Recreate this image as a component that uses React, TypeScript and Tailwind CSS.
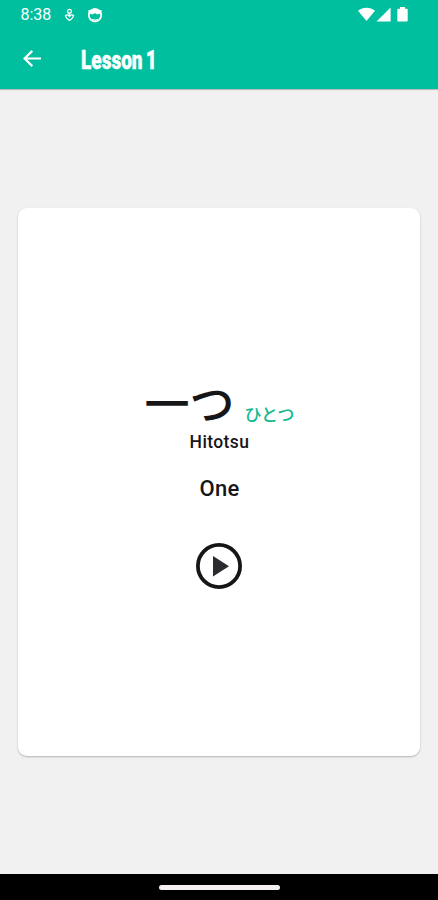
function StatusBar() {
  return (
    <div className="flex h-[29px] items-center pl-[20.5px] pr-[30px] text-white">
      <span className="w-[43.500px] text-[16px] leading-[29px]">8:38</span>
      <svg className="h-[14px] w-[11px]" viewBox="0 0 11 14" fill="none" stroke="currentColor" strokeWidth="1.300">
        <circle cx="5.500" cy="3.200" r="1.900" />
        <path d="M5.500 5v4M1.500 7.600C1.500 9.500 3 10.800 5.500 12.500 8 10.800 9.500 9.500 9.500 7.600 8 6.200 6.500 7 5.500 8.600 4.500 7 3 6.200 1.500 7.600Z" strokeLinejoin="round" />
      </svg>
      <svg className="ml-[11.500px] h-4 w-4" viewBox="0 0 16 16" fill="none" stroke="currentColor">
        <circle cx="8" cy="8.200" r="6.200" strokeWidth="1.700" />
        <path d="M1.600 7.500C1.800 3.800 4.500 1.500 8 1.500s6.200 2.300 6.400 6L12 6.800 10.500 7.600 8 6.200 5 7.600 3.500 6.800Z" fill="currentColor" stroke="none" />
        <path d="M1.300 4.300 4 3.600M12 3.600l2.700.7" strokeWidth="1.700" />
        <path d="M5.300 12.300q2.700 1.400 5.400 0" strokeWidth="1.200" />
      </svg>
      <svg className="ml-auto h-4 w-[50px]" viewBox="0 0 50 16" fill="currentColor">
        <path d="M0 3.800C4.800-.4 12.200-.4 17 3.800L8.500 14Z" />
        <path d="M18.500 14.500 32.600.5v14Z" />
        <path d="M40.200 1.700H42V0h5v1.700h1.800q.9 0 .9.900v11q0 .900-.9.900h-8.600q-.9 0-.9-.9v-11q0-.9.900-.9Z" />
      </svg>
    </div>
  );
}

export default function App() {
  return (
    <div className="flex h-[900px] w-[438px] flex-col bg-[#f1f1f1] font-['Roboto','Noto_Sans_CJK_JP',sans-serif]">
      <header className="h-[89px] shrink-0 bg-[#00bf9f] shadow-[0_1px_1px_rgba(0,0,0,0.22)]">
        <StatusBar />
        <div className="flex h-[60px] items-center pl-[23px] text-white">
          <svg className="h-[18px] w-[18px]" viewBox="0 0 18 18" fill="none" stroke="currentColor" strokeWidth="2.200">
            <path d="M18 8.500H1.800M9.300 .9 1.500 8.500l7.800 7.600" />
          </svg>
          <h1 className="ml-[40px] origin-left scale-x-[0.745] pt-[2px] text-[25.500px] leading-[58px] font-black [word-spacing:-2px] whitespace-nowrap [-webkit-text-stroke:0.4px_white]">Lesson 1</h1>
        </div>
      </header>

      <main className="flex flex-1 flex-col px-[18px] pt-[119px]">
        <section className="flex h-[548px] flex-col items-center rounded-[9px] bg-white pt-[172px] text-[#161618] shadow-[0_1px_2px_rgba(0,0,0,0.25)]">
          <div className="flex h-[52px] items-baseline pl-px font-['Noto_Sans_CJK_JP',sans-serif]">
            <span className="text-[45px] leading-[44px] font-medium">一つ</span>
            <span className="ml-[10px] text-[17px] leading-[18px] font-medium text-[#10b98f]">ひとつ</span>
          </div>
          <p className="pl-px text-[17.500px] leading-[21px] font-medium tracking-[0.4px]">Hitotsu</p>
          <p className="mt-[21px] pl-px text-[22px] leading-[29px] font-medium tracking-[0.2px]">One</p>
          <button className="mt-[40px]" aria-label="Play">
            <svg className="h-[46px] w-[46px]" viewBox="0 0 46 46">
              <circle cx="23" cy="23" r="21.100" fill="none" stroke="#161618" strokeWidth="3.800" />
              <path d="M17 13v20.500L33 23.200Z" fill="#2b2b2f" />
            </svg>
          </button>
        </section>
      </main>

      <footer className="flex h-[26px] shrink-0 items-center justify-center bg-black">
        <div className="h-[5px] w-[121px] rounded-full bg-[#f3eff2]" />
      </footer>
    </div>
  );
}
